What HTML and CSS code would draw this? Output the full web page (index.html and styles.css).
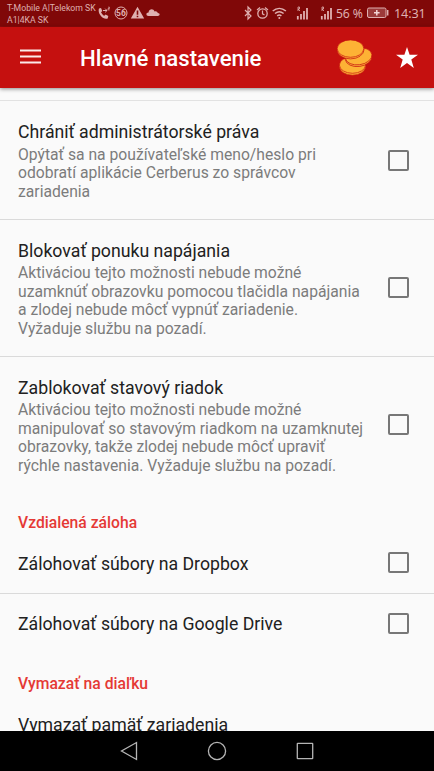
FILE: index.html
```html
<!DOCTYPE html>
<html lang="sk">
<head>
<meta charset="utf-8">
<title>Hlavné nastavenie</title>
<link rel="stylesheet" href="styles.css">
</head>
<body>
<div class="screen">
  <div class="status">
    <div class="carrier"><span>T-Mobile A|Telekom SK</span><span>A1|4KA SK</span></div>
    <svg class="notices" width="64" height="14" viewBox="0 0 64 14" fill="currentColor">
      <path d="M1 2.500 3 2l1.300 3L3 6.200c.8 1.600 1.800 2.700 3.300 3.600L7.600 8.600l2.700 1.400-.6 2.400C5 14.200-.8 7.500 1 2.500z"/>
      <path d="M5 4.500h4M7.200 2.700 9 4.500 7.200 6.300" fill="none" stroke="currentColor"/>
      <path d="M10 1.200h1.500v1.300H10v1.400h1.700" fill="none" stroke="currentColor" stroke-width=".7"/>
      <circle cx="23" cy="7" r="6" fill="none" stroke="currentColor"/>
      <text x="23" y="10.200" text-anchor="middle" class="badge-number">56</text>
      <path fill-rule="evenodd" d="M39.500.8 46.200 12.500H32.800zM38.700 4.500v4.200h1.600V4.500zm0 5.300v1.500h1.600V9.800z"/>
      <path d="M50.500 10c-2.700 0-2.800-3.500 0-3.500.5-3.800 5-4.200 6-1 2-.6 2.800.4 3.300 1.600 2.700.3 2.200 2.900 0 2.900z"/>
    </svg>
    <svg class="radios" width="92" height="16" viewBox="0 0 92 16" fill="none" stroke="currentColor">
      <path d="m1 5 6 6-3 3V2l3 3-6 6" stroke-width="1.200"/>
      <circle cx="18.500" cy="8.500" r="4.700" stroke-width="1.300"/><path d="M18.500 5.500v3.300l2 1.200M13 5l3-2.500M24 5l-3-2.500" stroke-width="1.200"/>
      <path d="M28.700 6c4-3.500 9.200-3.500 13.200 0M31 8.500c2.700-2.200 5.900-2.200 8.600 0M33.200 10.900c1.400-1.100 2.800-1.100 4.200 0" stroke-width="1.500"/>
      <circle cx="35.300" cy="13" r="1" fill="currentColor" stroke="none"/>
      <path d="M53.800 11v3.500M57 9v5.500M60 6v8.500M63 3v11.500M77.800 11v3.500M81 9v5.500M84 6v8.500M87 3v11.500" stroke-width="1.800"/>
      <path d="M54 2v4M54 2h1.500v2H54l2 2M78 2v4M78 2h1.500v2H78l2 2" stroke-width=".8"/>
    </svg>
    <span class="percent">56 %</span>
    <svg class="battery" width="22" height="12" viewBox="0 0 22 12">
      <rect x=".5" y="1" width="18.500" height="9.500" rx="1.500" fill="currentColor" fill-opacity=".3" stroke="currentColor"/>
      <path d="M20.700 3v5.500" stroke="currentColor" stroke-width="1.500"/>
      <path d="M9.800 3v5.500M7 5.800h5.600" stroke="#f3d6d6" stroke-width="1.500"/>
    </svg>
    <span class="clock">14:31</span>
  </div>
  <header class="appbar">
    <svg class="menu" width="21" height="15" viewBox="0 0 21 15"><path d="M0 1.500h21M0 7.500h21M0 13.500h21" stroke="#fbeaea" stroke-width="2.200"/></svg>
    <h1>Hlavné nastavenie</h1>
    <svg class="coins" width="37" height="38" viewBox="0 0 37 38" fill="#fdb235" stroke="#c5100f" stroke-width=".7">
      <ellipse cx="16.500" cy="27.600" rx="13.100" ry="8.600"/>
      <ellipse cx="16.500" cy="26" rx="13.100" ry="8.300"/>
      <ellipse cx="22.600" cy="18.700" rx="13.400" ry="8.800" transform="rotate(-8 22.600 18.700)"/>
      <ellipse cx="22.600" cy="17.300" rx="13.400" ry="8.500" transform="rotate(-8 22.600 17.300)"/>
      <ellipse cx="14.500" cy="10.600" rx="13.500" ry="9.300"/>
      <ellipse cx="14.500" cy="9.600" rx="13.300" ry="8.700"/>
    </svg>
    <svg class="star" width="22" height="21" viewBox="0 0 22 21"><path fill="#fff" d="m11 0 2.600 7.700H22l-6.700 4.900 2.500 8.400-6.800-5-6.800 5 2.500-8.400L0 7.700h8.400z"/></svg>
  </header>
  <main class="settings">
    <div class="previous"></div>
    <section class="row">
      <div class="text"><h2>Chrániť administrátorské práva</h2>
      <p>Opýtať sa na používateľské meno/heslo pri<br>odobratí aplikácie Cerberus zo správcov<br>zariadenia</p></div>
      <span class="check"></span>
    </section>
    <section class="row">
      <div class="text"><h2>Blokovať ponuku napájania</h2>
      <p>Aktiváciou tejto možnosti nebude možné<br>uzamknúť obrazovku pomocou tlačidla napájania<br>a zlodej nebude môcť vypnúť zariadenie.<br>Vyžaduje službu na pozadí.</p></div>
      <span class="check"></span>
    </section>
    <section class="row last">
      <div class="text"><h2>Zablokovať stavový riadok</h2>
      <p>Aktiváciou tejto možnosti nebude možné<br>manipulovať so stavovým riadkom na uzamknutej<br>obrazovky, takže zlodej nebude môcť upraviť<br>rýchle nastavenia. Vyžaduje službu na pozadí.</p></div>
      <span class="check"></span>
    </section>
    <h3>Vzdialená záloha</h3>
    <section class="row single">
      <h2>Zálohovať súbory na Dropbox</h2><span class="check"></span>
    </section>
    <section class="row single last">
      <h2>Zálohovať súbory na Google Drive</h2><span class="check"></span>
    </section>
    <h3>Vymazať na diaľku</h3>
    <section class="row single last">
      <h2>Vymazať pamäť zariadenia</h2>
    </section>
  </main>
  <nav class="navbar">
    <svg width="18" height="20" viewBox="0 0 18 20"><path d="M16.500 1.500v17L1.500 10z"/></svg>
    <svg width="20" height="20" viewBox="0 0 20 20"><circle cx="10" cy="10" r="8.600"/></svg>
    <svg width="18" height="18" viewBox="0 0 18 18"><rect x="1.300" y="1.300" width="15.400" height="15.400" rx=".5"/></svg>
  </nav>
</div>
</body>
</html>
```
FILE: styles.css
```css
* { box-sizing: border-box; }
body { margin: 0; font-family: Roboto, "Liberation Sans", sans-serif; }
h1, h2, h3, p { margin: 0; }
svg { display: block; flex: none; }

.screen {
  width: 434px;
  height: 771px;
  display: flex;
  flex-direction: column;
  overflow: hidden;
  background: #fafafa;
}

.status {
  flex: none;
  height: 27px;
  display: flex;
  align-items: center;
  padding-left: 7px;
  background: #800808;
  border-bottom: 1px solid #8f0a0a;
  color: #dfb0b0;
  white-space: nowrap;
}
.carrier {
  width: 91px;
  display: flex;
  flex-direction: column;
  padding-top: 1px;
  font-size: 8.7px;
  line-height: 12px;
}
.notices { width: 64px; }
.badge-number { font-size: 8.5px; font-weight: 700; }
.radios { margin-left: 82px; }
.percent { width: 31px; font: 12.2px "Noto Sans", sans-serif; letter-spacing: -.1px; }
.battery { width: 22px; }
.clock { margin-left: 5px; font: 12.6px "Noto Sans", sans-serif; letter-spacing: -.1px; }

.appbar {
  flex: none;
  position: relative;
  height: 61px;
  display: flex;
  align-items: center;
  padding: 0 16px 0 20px;
  background: #c5100f;
  box-shadow: 0 1px 4px rgba(0, 0, 0, .45);
}
.appbar h1 {
  margin: 1px 0 0 39px;
  flex: 1;
  color: #fff;
  font-size: 22.2px;
  line-height: 26px;
  font-weight: 500;
  white-space: nowrap;
}
.menu { margin-top: -2px; }
.coins { position: relative; left: 1px; }
.star { margin-left: 24px; }

.settings { flex: 1; min-height: 0; overflow: hidden; }
.previous { height: 13px; border-bottom: 1px solid #e2e2e2; }
.row {
  display: flex;
  align-items: center;
  justify-content: space-between;
  padding: 20px 25px 17.5px 18px;
  border-bottom: 1px solid #dadada;
  white-space: nowrap;
}
.row.last { border-bottom: 0; }
.row h2 {
  color: #212121;
  font-size: 17.7px;
  line-height: 22px;
  font-weight: 400;
}
.row p {
  margin-top: 2.5px;
  color: #7c7c7c;
  font-size: 15.7px;
  line-height: 18.5px;
}
.check {
  flex: none;
  width: 21px;
  height: 21px;
  margin-bottom: 2px;
  border: 2px solid #777;
  border-radius: 2px;
}
.settings h3 {
  height: 41px;
  padding: 20.5px 18px 0;
  color: #e53935;
  font-size: 15.7px;
  line-height: 19px;
  font-weight: 500;
}
.row.single { height: 60px; padding-top: 1px; padding-bottom: 0; }

.navbar {
  flex: none;
  height: 40px;
  display: flex;
  align-items: center;
  justify-content: space-between;
  padding: 0 120px;
  background: #000;
}
.navbar svg { fill: none; stroke: #b5b5b5; stroke-width: 1.3; }
```
